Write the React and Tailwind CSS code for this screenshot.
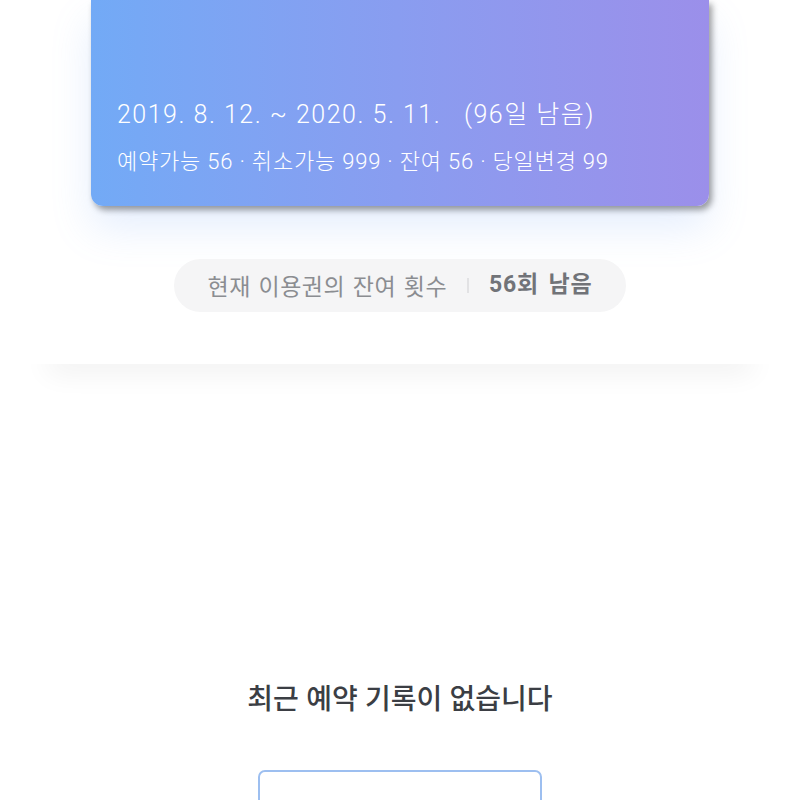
export default function App() {
  const kr = { fontFamily: '"Noto Sans CJK KR", "Noto Sans", sans-serif' };
  const card = { fontFamily: 'Roboto, "Noto Sans CJK KR", sans-serif' };
  return (
    <div className="w-[800px] h-[800px] bg-white overflow-hidden" style={kr}>
      <div className="px-[91px]">
        <div
          className="h-[206px] rounded-b-[12px] bg-gradient-to-r from-[#72aaf6] to-[#9b8fea] shadow-[3px_4px_6px_rgba(0,0,0,0.38),0_22px_40px_rgba(110,160,245,0.18)] flex flex-col justify-end px-[26px] pb-[30px] text-white"
          style={card}
        >
          <div className="text-[25px] font-light leading-[30px] tracking-[1.5px] whitespace-nowrap">
            2019. 8. 12. ~ 2020. 5. 11.&nbsp;&nbsp;&nbsp;(96일 남음)
          </div>
          <div className="mt-[18px] text-[22px] font-light leading-[28px] tracking-[0.8px] whitespace-nowrap">
            예약가능 56 · 취소가능 999 · 잔여 56 · 당일변경 99
          </div>
        </div>
      </div>

      <div className="flex justify-center mt-[53px]">
        <div className="h-[53px] w-[452px] rounded-full bg-[#f5f5f6] flex items-center justify-center">
          <span className="text-[23px] text-[#8b8d91] tracking-[0.5px] [word-spacing:2px]">현재 이용권의 잔여 횟수</span>
          <span className="mx-[20px] h-[15px] w-[2px] bg-[#e2e2e4]" />
          <span className="text-[23px] font-bold text-[#717378] tracking-[0.8px] [word-spacing:3px]" style={{ fontFamily: 'Roboto, "Noto Sans CJK KR", sans-serif' }}>56회 남음</span>
        </div>
      </div>

      <div className="mt-[52px] h-[60px] overflow-hidden relative">
        <div className="mx-auto w-[88%] h-[20px] -mt-[20px] bg-white shadow-[0_8px_28px_rgba(0,0,0,0.07)]" />
      </div>

      <div className="flex flex-col items-center pt-[256px]">
        <div className="text-[28px] font-medium text-[#3b3e44] tracking-[0px] [word-spacing:1px] leading-[34px]">
          최근 예약 기록이 없습니다
        </div>
        <div className="mt-[56px] w-[284px] h-[80px] rounded-[7px] border-2 border-[#9dbff0] bg-white" />
      </div>
    </div>
  );
}
